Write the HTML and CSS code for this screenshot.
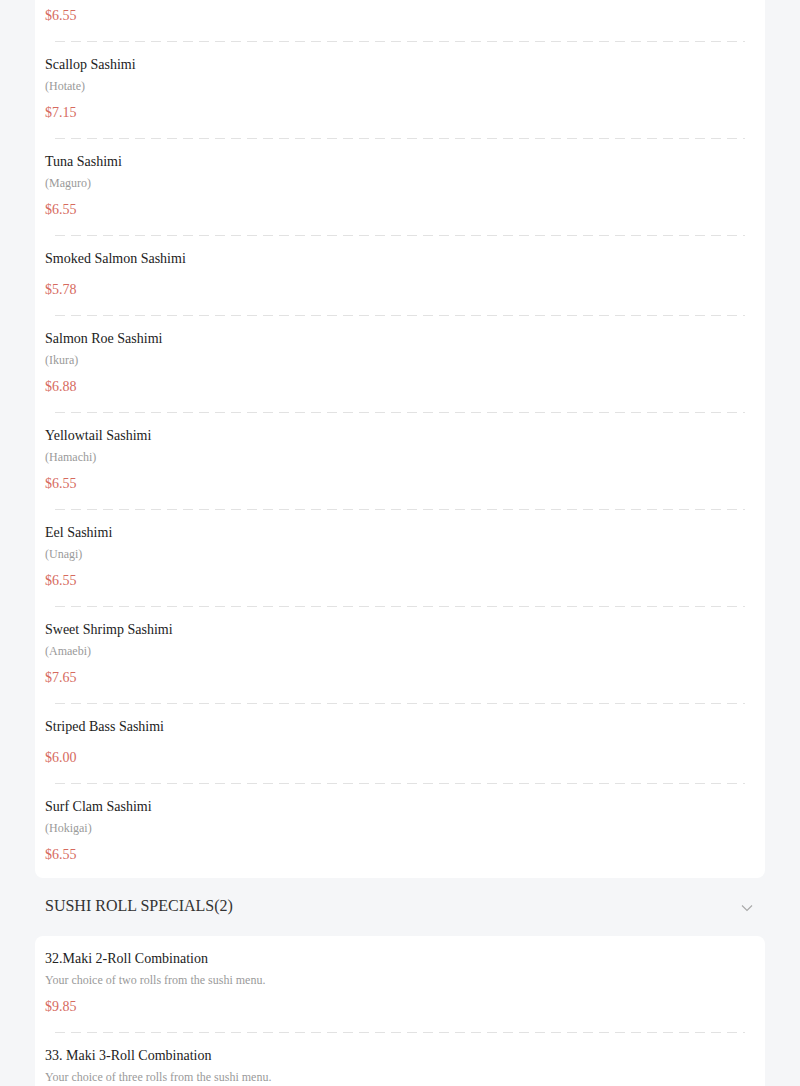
FILE: index.html
```html
<!DOCTYPE html>
<html lang="en">
<head>
<meta charset="utf-8">
<title>Menu</title>
<link rel="stylesheet" href="styles.css">
</head>
<body>
<main class="menu">
  <section class="card card-cut">
    <div class="item item-partial">
      <div class="price">$6.55</div>
    </div>
    <div class="sep"></div>
    <div class="item has-sub">
      <div class="name">Scallop Sashimi</div>
      <div class="sub">(Hotate)</div>
      <div class="price">$7.15</div>
    </div>
    <div class="sep"></div>
    <div class="item has-sub">
      <div class="name">Tuna Sashimi</div>
      <div class="sub">(Maguro)</div>
      <div class="price">$6.55</div>
    </div>
    <div class="sep"></div>
    <div class="item">
      <div class="name">Smoked Salmon Sashimi</div>
      <div class="price">$5.78</div>
    </div>
    <div class="sep"></div>
    <div class="item has-sub">
      <div class="name">Salmon Roe Sashimi</div>
      <div class="sub">(Ikura)</div>
      <div class="price">$6.88</div>
    </div>
    <div class="sep"></div>
    <div class="item has-sub">
      <div class="name">Yellowtail Sashimi</div>
      <div class="sub">(Hamachi)</div>
      <div class="price">$6.55</div>
    </div>
    <div class="sep"></div>
    <div class="item has-sub">
      <div class="name">Eel Sashimi</div>
      <div class="sub">(Unagi)</div>
      <div class="price">$6.55</div>
    </div>
    <div class="sep"></div>
    <div class="item has-sub">
      <div class="name">Sweet Shrimp Sashimi</div>
      <div class="sub">(Amaebi)</div>
      <div class="price">$7.65</div>
    </div>
    <div class="sep"></div>
    <div class="item">
      <div class="name">Striped Bass Sashimi</div>
      <div class="price">$6.00</div>
    </div>
    <div class="sep"></div>
    <div class="item has-sub item-last">
      <div class="name">Surf Clam Sashimi</div>
      <div class="sub">(Hokigai)</div>
      <div class="price">$6.55</div>
    </div>
  </section>

  <div class="section-head">
    <span class="section-title">SUSHI ROLL SPECIALS(2)</span>
    <svg class="chevron" width="12" height="8" viewBox="0 0 12 8" aria-hidden="true">
      <path d="M1 1.5 L6 6.5 L11 1.5" fill="none" stroke="#a8a8a8" stroke-width="1.1"/>
    </svg>
  </div>

  <section class="card">
    <div class="item has-sub">
      <div class="name">32.Maki 2-Roll Combination</div>
      <div class="sub">Your choice of two rolls from the sushi menu.</div>
      <div class="price">$9.85</div>
    </div>
    <div class="sep"></div>
    <div class="item has-sub">
      <div class="name">33. Maki 3-Roll Combination</div>
      <div class="sub">Your choice of three rolls from the sushi menu.</div>
      <div class="price">$11.50</div>
    </div>
  </section>
</main>
</body>
</html>
```
FILE: styles.css
```css
html, body {
  margin: 0;
  padding: 0;
}

body {
  background: #f5f6f8;
  font-family: "Liberation Serif", "Times New Roman", serif;
  color: #222;
}

.menu {
  padding: 0 35px;
}

.card {
  background: #ffffff;
  border-radius: 8px;
  overflow: hidden;
}

.card-cut {
  border-radius: 0 0 8px 8px;
}

.item {
  padding: 13px 10px 15px;
}

.item-partial {
  padding-top: 6px;
}

.item-last {
  padding-bottom: 13px;
}

.name {
  font-size: 14px;
  line-height: 20px;
  color: #222;
}

.sub {
  font-size: 12px;
  line-height: 20px;
  margin-top: 1px;
  color: #9a9a9a;
}

.price {
  font-size: 14px;
  line-height: 20px;
  margin-top: 11px;
  color: #d66a5e;
}

.item-partial .price {
  margin-top: 0;
}

.has-sub .price {
  margin-top: 7px;
}

.sep {
  height: 1px;
  margin: 0 20px;
  background: repeating-linear-gradient(to right, #e2e2e2 0 10px, transparent 10px 16px);
}

.section-head {
  display: flex;
  align-items: center;
  justify-content: space-between;
  padding: 17px 12px 19px 10px;
}

.section-title {
  font-size: 16px;
  line-height: 22px;
  color: #333;
}

.chevron {
  display: block;
  margin-top: 3px;
}
```
